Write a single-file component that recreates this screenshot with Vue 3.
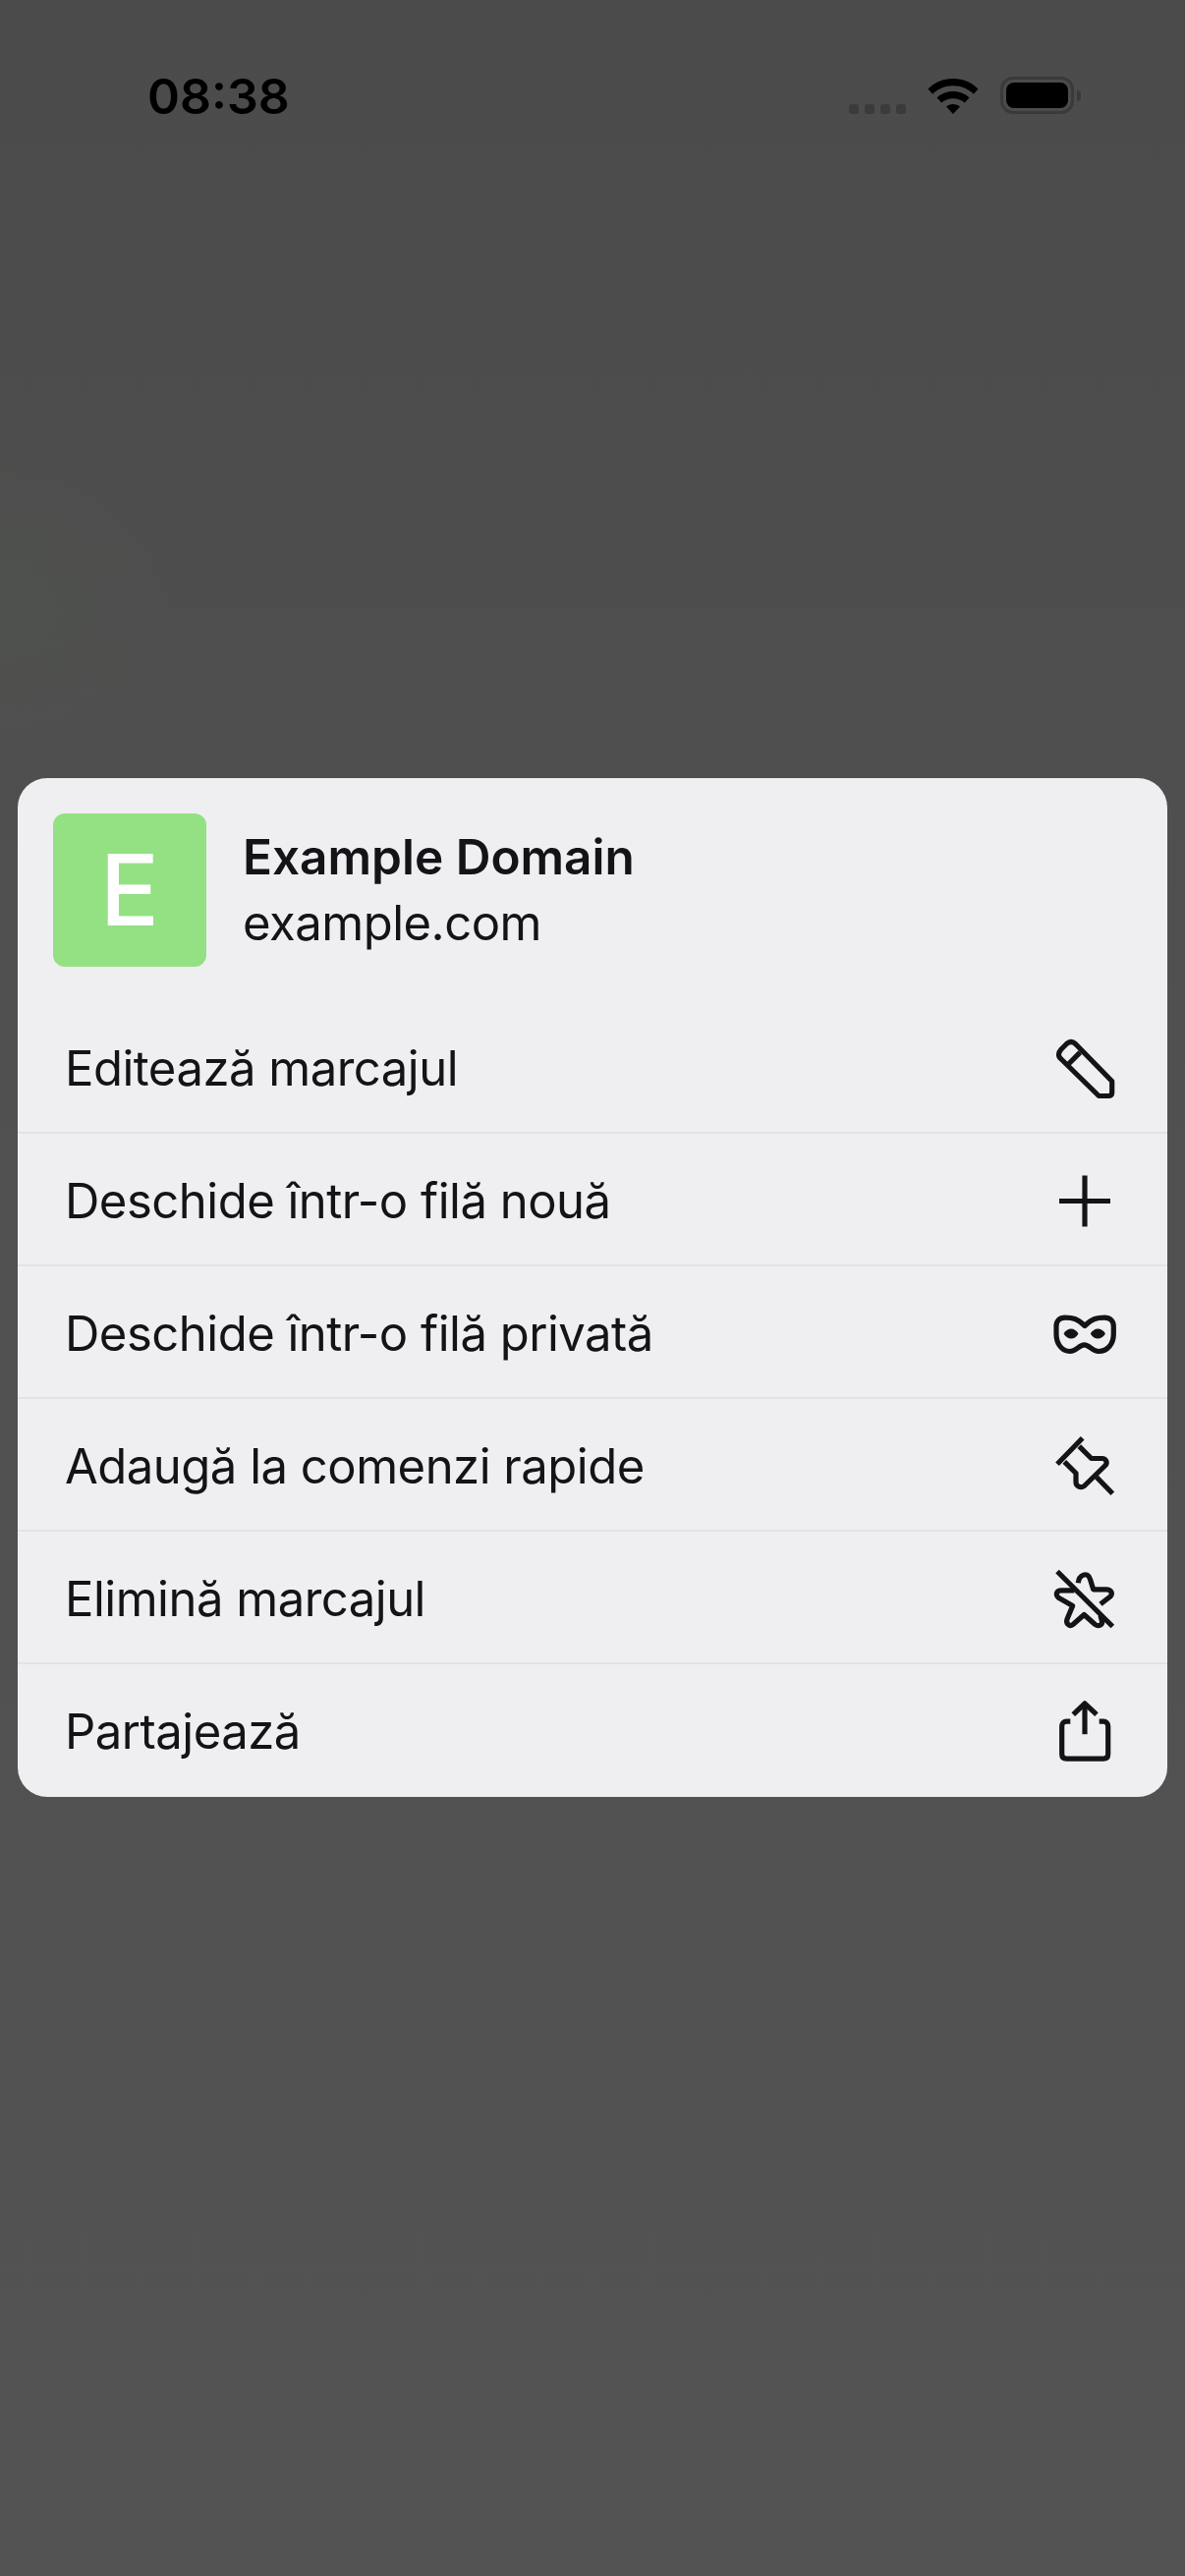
<template>
  <div class="screen">
    <!-- Status bar -->
    <div class="status-bar">
      <span class="time">08:38</span>
      <div class="status-icons">
        <div class="signal">
          <i v-for="n in 4" :key="n"></i>
        </div>
        <svg class="wifi" width="52" height="38" viewBox="0 0 52 38">
          <path d="M0.5 12.5C7 6 16 2 26 2s19 4 25.5 10.5l-4.6 5.2C41.5 12.5 34 9.300 26 9.300S10.500 12.500 5.100 17.700Z" />
          <path d="M9.500 21.500C13.500 17.500 19.500 15 26 15s12.500 2.500 16.500 6.500l-4.700 5C34.800 23.800 30.600 22.200 26 22.200s-8.800 1.600-11.800 4.300Z" />
          <path d="M19 30.500c1.800-1.600 4.300-2.500 7-2.500s5.200.9 7 2.500L26 38Z" />
        </svg>
        <div class="battery">
          <div class="battery-fill"></div>
        </div>
        <div class="battery-nub"></div>
      </div>
    </div>

    <!-- Bookmark sheet -->
    <div class="sheet">
      <div class="sheet-head">
        <div class="favicon">E</div>
        <div class="site">
          <div class="site-title">Example Domain</div>
          <div class="site-url">example.com</div>
        </div>
      </div>
      <div v-for="item in items" :key="item.label" class="row">
        <span class="row-label">{{ item.label }}</span>
        <svg class="row-icon" width="72" height="72" viewBox="0 0 72 72">
          <path v-for="d in item.paths" :key="d" :d="d" />
          <path v-for="d in item.filled" :key="d" :d="d" class="solid" />
        </svg>
      </div>
    </div>
  </div>
</template>

<script setup>
const items = [
  {
    label: 'Editează marcajul',
    paths: [
      'M17.500 12.500Q22 8.500 26.500 12.500L63.700 50.500V62Q63.700 65.500 60 65.500H50.300L12 28Q7 23.800 12 18Z',
      'M18 34.500L31.300 21.200',
    ],
  },
  {
    label: 'Deschide într-o filă nouă',
    paths: ['M10 37.500H62', 'M36 11.500V63.500'],
  },
  {
    label: 'Deschide într-o filă privată',
    paths: [
      'M16 21.200C24 21.200 28 22 36 29.500C44 22 48 21.200 56 21.200C62 21.200 65.300 24.500 65.300 30V38C65.300 48 59 55.500 50 55.500C43.500 55.500 41 48.800 35.500 48.800C30 48.800 27.500 55.500 21 55.500C13 55.500 7 48 7 38V30C7 24.500 10 21.200 16 21.200Z',
    ],
    filled: [
      'M14.500 37.500C16.500 34 19.500 32.500 22 32.500C25 32.500 28 34.500 29.500 37.500C28 40.500 25 42.500 22 42.500C19.500 42.500 16.500 41 14.500 37.500Z',
      'M41.800 37.500C43.300 34.500 46.300 32.500 49.300 32.500C52 32.500 55 34 57 37.500C55 41 52 42.500 49.300 42.500C46.300 42.500 43.300 40.500 41.800 37.500Z',
    ],
  },
  {
    label: 'Adaugă la comenzi rapide',
    paths: [
      'M8 35.200L33.700 8.800',
      'M30.300 17.200L42.700 29.500H53.700C57.500 29.500 59.500 33.500 57 36.500L35.500 57.500C32 60 27 58 27 53.500V44.500L15.300 32.800',
      'M48 48.500L64.300 65.200',
    ],
  },
  {
    label: 'Elimină marcajul',
    paths: [
      'M8 9.500L64.300 65.500',
      'M29.300 21.200C30 13 39 9 41.500 17.500L44.700 27.800H58C62.500 27.800 65 31.500 62 35L52 42.800',
      'M25.300 28.800H12C7.500 28.800 5.500 33 9.300 36.200L23.700 44.500L18 58C16.500 63 20.500 66 24 63.500L35.300 53.500L46.500 63.500C50 66 54.500 64 53.500 60L52 54.500',
    ],
  },
  {
    label: 'Partajează',
    paths: [
      'M36 9V40.200',
      'M24.300 20.200L36 8.800L48 20.200',
      'M21.300 27.200H17.500C14.500 27.200 12.700 29 12.700 32V60.500C12.700 63.500 14.500 65.200 17.500 65.200H54.900C57.900 65.200 59.700 63.500 59.700 60.500V32C59.700 29 57.900 27.200 54.900 27.200H50.700',
    ],
  },
];
</script>

<style>
html,
body {
  margin: 0;
  background: #505050;
}
</style>

<style scoped>
.screen {
  height: 2622px;
  overflow: hidden;
  font-family: Inter, 'Noto Sans', sans-serif;
  background:
    radial-gradient(circle at 10px 610px, rgba(80, 100, 70, 0.14), rgba(80, 100, 70, 0) 160px),
    linear-gradient(180deg, #4b4b4b 0%, #505050 40%, #535353 100%);
}

.status-bar {
  display: flex;
  justify-content: space-between;
  align-items: flex-start;
  height: 792px;
  box-sizing: border-box;
  padding: 68px 106px 0 150px;
}

.time {
  font-size: 50px;
  font-weight: 600;
  line-height: 60px;
  color: #000;
}

.status-icons {
  display: flex;
  align-items: flex-start;
  padding-top: 10px;
}

.signal {
  display: flex;
  gap: 6px;
  margin-top: 28px;
  margin-right: 22px;
}

.signal i {
  width: 10px;
  height: 10px;
  border-radius: 3px;
  background: #3b3b3b;
}

.wifi {
  fill: #000;
  margin-right: 22px;
}

.battery {
  box-sizing: border-box;
  width: 75px;
  height: 38px;
  padding: 3px;
  border: 3px solid #3a3a3a;
  border-radius: 13px;
}

.battery-fill {
  height: 100%;
  border-radius: 8px;
  background: #000;
}

.battery-nub {
  width: 4px;
  height: 11px;
  margin: 14px 0 0 3px;
  border-radius: 0 6px 6px 0;
  background: #3a3a3a;
}

.sheet {
  margin: 0 18px;
  border-radius: 30px;
  background: #efeff2;
  color: #131318;
}

.sheet-head {
  display: flex;
  align-items: center;
  gap: 37px;
  height: 225px;
  box-sizing: border-box;
  padding: 36px 36px 33px;
}

.favicon {
  display: flex;
  align-items: center;
  justify-content: center;
  flex: none;
  width: 156px;
  height: 156px;
  border-radius: 12px;
  background: #93e183;
  color: #fff;
  font-size: 100px;
  font-weight: 500;
  line-height: 1;
}

.site {
  padding-top: 1px;
}

.site-title {
  font-size: 49.5px;
  font-weight: 600;
  line-height: 67px;
}

.site-url {
  font-size: 49px;
  letter-spacing: -0.5px;
  line-height: 68px;
}

.row {
  display: flex;
  align-items: center;
  justify-content: space-between;
  height: 135px;
  box-sizing: border-box;
  padding: 0 48px;
  border-top: 2px solid #e3e3e6;
}

.row:nth-child(2) {
  border-top-color: transparent;
}

.row:last-child {
  height: 137px;
  padding-bottom: 2px;
}

.row-label {
  padding-top: 5px;
  font-size: 49px;
  letter-spacing: -0.5px;
  line-height: 60px;
}

.row-icon {
  flex: none;
  fill: none;
  stroke: #131318;
  stroke-width: 5.200;
  stroke-linejoin: round;
}

.row-icon .solid {
  fill: #131318;
  stroke: none;
}
</style>
